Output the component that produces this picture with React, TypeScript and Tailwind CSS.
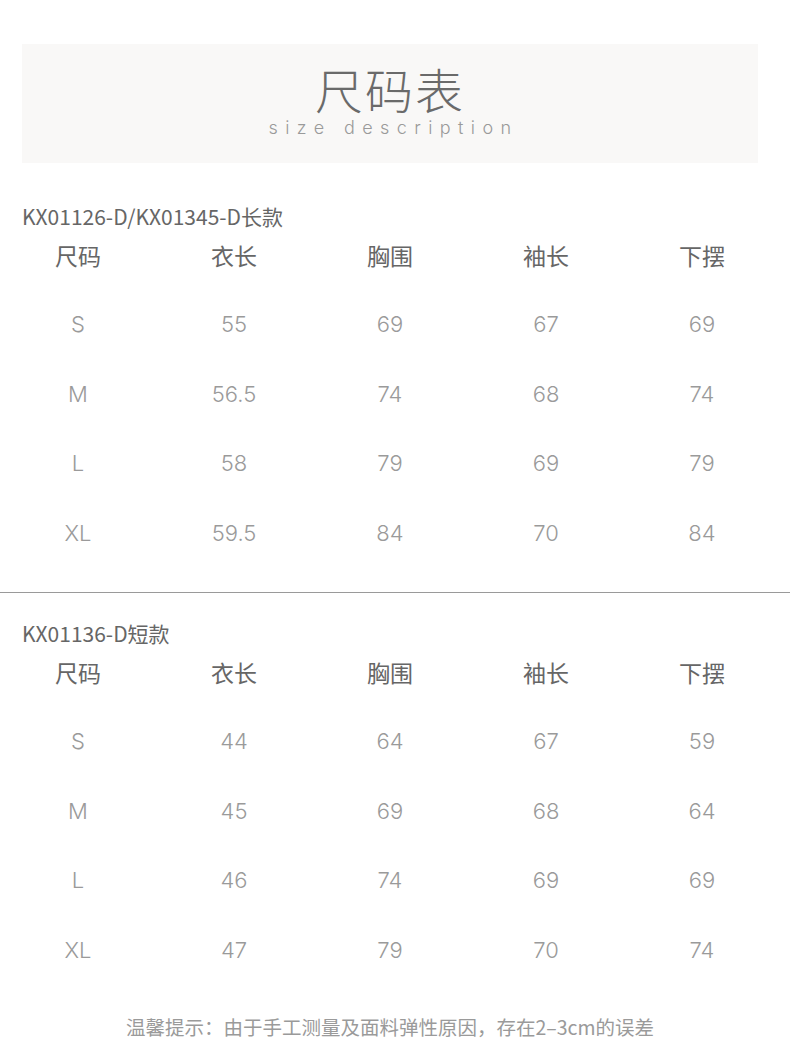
import React from 'react';

const headers = ['尺码', '衣长', '胸围', '袖长', '下摆'];

const longRows = [
  ['S', '55', '69', '67', '69'],
  ['M', '56.5', '74', '68', '74'],
  ['L', '58', '79', '69', '79'],
  ['XL', '59.5', '84', '70', '84'],
];

const shortRows = [
  ['S', '44', '64', '67', '59'],
  ['M', '45', '69', '68', '64'],
  ['L', '46', '74', '69', '69'],
  ['XL', '47', '79', '70', '74'],
];

const SizeTable = ({ title, rows }: { title: string; rows: string[][] }) => (
  <div>
    <div className="pl-[22px] text-[21px] leading-[28px] text-[#666]">{title}</div>
    <div className="grid w-[780px] grid-cols-5 pt-[10px] text-center">
      {headers.map(h => (
        <div key={h} className="text-[23px] leading-[30px] text-[#666]">{h}</div>
      ))}
    </div>
    <div className="w-[780px] pt-[39px]">
      {rows.map(row => (
        <div key={row[0]} className="grid h-[69.5px] grid-cols-5 text-center">
          {row.map((cell, i) => (
            <div
              key={i}
              className="text-[22px] font-light leading-[30px] text-[#9a9a9a]"
              style={{ fontFamily: 'Inter, "Noto Sans", sans-serif' }}
            >
              {cell}
            </div>
          ))}
        </div>
      ))}
    </div>
  </div>
);

export default function App() {
  return (
    <div
      className="h-[1061px] w-[790px] bg-white"
      style={{ fontFamily: '"Noto Sans CJK SC", "Noto Sans", sans-serif' }}
    >
      <div className="pt-[44px] px-[22px] pr-[32px]">
        <div className="flex h-[119px] flex-col items-center bg-[#f9f8f7] pt-[16px]">
          <div className="text-[48px] font-light leading-[56px] tracking-[2px] text-[#6a6a6a]">尺码表</div>
          <div
            className="mt-[1px] pl-[7px] text-[18px] font-light leading-[22px] tracking-[7.4px] text-[#9a9a9a]"
            style={{ fontFamily: 'Inter, "Noto Sans", sans-serif' }}
          >
            size description
          </div>
        </div>
      </div>

      <div className="pt-[39px]">
        <SizeTable title="KX01126-D/KX01345-D长款" rows={longRows} />
      </div>

      <div className="mt-[5px] h-px w-full bg-[#9a9a9a]" />

      <div className="pt-[26px]">
        <SizeTable title="KX01136-D短款" rows={shortRows} />
      </div>

      <div className="pt-[10px] pr-[10px] text-center text-[19.5px] leading-[26px] text-[#9a9a9a]">
        温馨提示：由于手工测量及面料弹性原因，存在2–3cm的误差
      </div>
    </div>
  );
}
